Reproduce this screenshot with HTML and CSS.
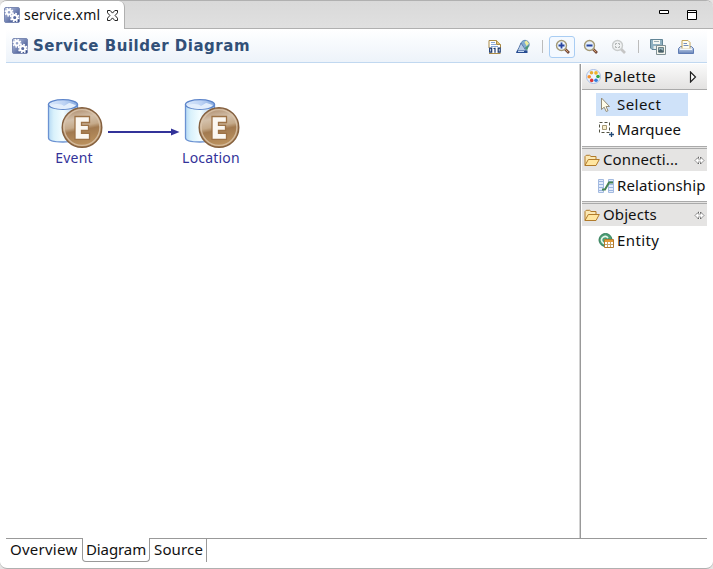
FILE: index.html
```html
<!DOCTYPE html>
<html lang="en">
<head>
<meta charset="utf-8">
<title>service.xml</title>
<link rel="stylesheet" href="styles.css">
</head>
<body>
<svg class="defs" width="0" height="0" aria-hidden="true">
  <defs>
    <linearGradient id="blue" x1="0" y1="0" x2="1" y2="1"><stop offset="0" stop-color="#c4cee6"/><stop offset=".5" stop-color="#7484b4"/><stop offset="1" stop-color="#263c7c"/></linearGradient>
    <linearGradient id="glass" x1="0" x2="1"><stop offset="0" stop-color="#b5d9f4"/><stop offset=".18" stop-color="#d9f1fb"/><stop offset=".5" stop-color="#f3fdff"/><stop offset="1" stop-color="#a9c9ec"/></linearGradient>
    <linearGradient id="lid" x1="0" x2="1"><stop offset="0" stop-color="#dbe9fb"/><stop offset=".55" stop-color="#bcd2f4"/><stop offset="1" stop-color="#84a8de"/></linearGradient>
    <linearGradient id="bronze" x1=".2" y1="0" x2=".4" y2="1"><stop offset="0" stop-color="#a88260"/><stop offset=".3" stop-color="#d3c0aa"/><stop offset=".5" stop-color="#c5aa8a"/><stop offset=".6" stop-color="#a27a50"/><stop offset="1" stop-color="#bd935f"/></linearGradient>
    <linearGradient id="steel" x1="0" y1="0" x2="0" y2="1"><stop offset="0" stop-color="#dfeaf7"/><stop offset="1" stop-color="#6683b8"/></linearGradient>
    <symbol id="gears" viewBox="0 0 16 16">
      <rect x=".5" y=".5" width="15" height="15" rx="1.5" fill="url(#blue)" stroke="#7b89b3"/>
      <g fill="none" stroke="#fff"><circle cx="5" cy="5.200" r="2.200" stroke-width="1.800"/><circle cx="5" cy="5.200" r="3.600" stroke-width="1.700" stroke-dasharray="1.500 1.330"/><circle cx="10.700" cy="10.500" r="2.500" stroke-width="1.900"/><circle cx="10.700" cy="10.500" r="4" stroke-width="1.700" stroke-dasharray="1.700 1.440"/></g>
    </symbol>
    <symbol id="entity" viewBox="0 0 56 52">
      <path d="M1.500 7v33c0 2.600 6 4 14.500 4s14.500-1.400 14.500-4V7z" fill="url(#glass)" stroke="#6b92d2" stroke-width="1.300"/>
      <ellipse cx="16" cy="6.500" rx="14.500" ry="4.800" fill="url(#lid)" stroke="#5d85ca" stroke-width="1.300"/>
      <path d="M3 7c8-2 12-1 14 1l5-3c4 1 7 2 7 2-2 3-8 4-13 4S4 10 3 7z" fill="#e3eefc"/>
      <circle cx="35" cy="29.500" r="19.800" fill="url(#bronze)" stroke="#84603f" stroke-width="1.400"/>
      <circle cx="35" cy="29.500" r="17.900" fill="none" stroke="#dbc6ad" stroke-width="1.400" opacity=".8"/>
      <path d="M28 18.500h14.500v6h-8v2.800h7v5h-7v3h8v6H28z" fill="#fbf7f1" stroke="#9d7246" stroke-width="1.300"/>
    </symbol>
    <symbol id="folder" viewBox="0 0 16 16">
      <path d="M1 13.500v-9l1.200-1.200h3.500L7 4.500h5v3" fill="#fbe8b3" stroke="#b17b2b"/>
      <path d="M1 13.500 4.300 7.500h11L12 13.500z" fill="#ffe6a0" stroke="#b17b2b"/>
    </symbol>
    <symbol id="pin" viewBox="0 0 11 9">
      <path d="M4.500 1 1 4.500 4.500 8M6.500 1 10 4.500 6.500 8M4.500 1v2h2V1M4.500 8V6h2v2" fill="#fff" stroke="#555" stroke-width=".9" stroke-dasharray="1.200 .5"/>
    </symbol>
  </defs>
</svg>
<div class="window">
  <header class="tabbar">
    <div class="tab">
      <svg class="i16"><use href="#gears"/></svg><span class="file">service.xml</span>
      <svg class="close" viewBox="0 0 11 11"><path d="M.5.500h2.700l2.300 2.600L7.800.500h2.700v2.300L8.100 5.500l2.400 2.700v2.300H7.800L5.500 7.900l-2.300 2.600H.5V8.200l2.400-2.700L.5 2.800z" fill="#fff" stroke="#222"/></svg>
    </div>
    <svg class="min" viewBox="0 0 10 4"><path d="M.5.500h9v3h-9z" fill="#fff" stroke="#000"/></svg>
    <svg class="max" viewBox="0 0 10 10"><path d="M.5.500h9v9h-9zM1 2.500h8" fill="#fff" stroke="#000"/></svg>
  </header>
  <div class="body">
    <div class="heading">
      <svg class="i16"><use href="#gears"/></svg>
      <h1>Service Builder Diagram</h1>
      <div class="toolbar">
        <svg class="tool" viewBox="0 0 16 16"><path d="M2 14V1.500h7.500l4 4V14z" fill="#fff"/><path d="M2 9V1.500h7.500l4 4V9M2 14.500h11.500" fill="none" stroke="#ab8b47"/><path d="M9.500 1.500v4h4" fill="#e1c379" stroke="#ab8b47"/><path d="M4 3.500h4M4 5.500h5M4 7.500h7" stroke="#8aa9d9"/><path d="M2.700 9.200h2v4h-2zM11.200 9.200h2v4h-2zM8 8.700v5M6.500 9.500H8" fill="none" stroke="#17346a" stroke-width="1.200"/></svg>
        <svg class="tool" viewBox="0 0 16 16"><circle cx="10" cy="5.500" r="4.200" fill="#82acd1" stroke="#648eb7"/><path d="m9.500 3 2-1.500 2.500 3-2.500 2.500z" fill="#eeee9a"/><path d="M10 8.500 14 6l-2 6z" fill="#4b9870"/><path d="M4 8.500 6 4l3 4.500 2.500 4H2z" fill="#b7cce5" stroke="#5b7bac"/><path d="M2 11.500h10.500V14H1z" fill="#264b91"/><path d="M3 12.500h6" stroke="#c5d8ef"/></svg>
        <i class="sep"></i>
        <span class="pressed"><svg class="tool" viewBox="0 0 16 16"><path d="m10 10 4 4" stroke="#754c3e" stroke-width="2.600"/><path d="m10 10 3 3" stroke="#d5a06a"/><circle cx="6.500" cy="6.500" r="5" fill="#edf5fc" stroke="#a39976" stroke-width="1.400"/><path d="M3.500 6.500h6M6.500 3.500v6" stroke="#2745a0" stroke-width="1.800"/></svg></span>
        <svg class="tool" viewBox="0 0 16 16"><path d="m10 10 4 4" stroke="#754c3e" stroke-width="2.600"/><path d="m10 10 3 3" stroke="#d5a06a"/><circle cx="6.500" cy="6.500" r="5" fill="#e5eff9" stroke="#a39976" stroke-width="1.400"/><path d="M3.500 6.500h6" stroke="#2745a0" stroke-width="1.800"/></svg>
        <svg class="tool" viewBox="0 0 16 16"><path d="m10 10 4 4" stroke="#c5c5c5" stroke-width="2.600"/><circle cx="6.500" cy="6.500" r="5" fill="#f0f2f3" stroke="#c9cccc" stroke-width="1.400"/><path d="M4.500 6V4.500H6M7 4.500h1.500V6M8.500 7v1.500H7M6 8.500H4.500V7" fill="none" stroke="#b1b5b5"/></svg>
        <i class="sep"></i>
        <svg class="tool" viewBox="0 0 16 16"><path d="M.5.500h12v10H2L.5 9z" fill="#8fb0c0" stroke="#628596"/><path d="M3 1h7v4H3z" fill="#f5f7f2"/><path d="M4 2.500h5" stroke="#9bacb2"/><path d="M3.500 7h5v3h-5z" fill="#e7eded"/><path d="M6.500 6.500h9v9h-9z" fill="#f6f6ee" stroke="#7f9094"/><path d="M8.500 8.500h5v4.500h-5z" fill="#9bb7bf" stroke="#6d8286"/><path d="m8.500 12 2-2 3 2v1.500h-5z" fill="#4a626b"/></svg>
        <svg class="tool" viewBox="0 0 16 16"><path d="M2.500 7.500h11l2 2v5H.5v-5z" fill="url(#steel)" stroke="#5f7cb4"/><path d="M4 10V1.500h6l2 2V10z" fill="#fffdf0" stroke="#c3a45b"/><path d="M5.500 4.500h3.500M5.500 6.500h5" stroke="#738ebf"/><path d="M2 9.500h12V11H2z" fill="#f3f8fe"/></svg>
      </div>
    </div>
    <main class="editor">
      <section class="canvas">
        <div class="node event"><svg class="entity"><use href="#entity"/></svg><span>Event</span></div>
        <svg class="link" viewBox="0 0 72 8"><path d="M0 4h65" stroke="#333399" stroke-width="2"/><path d="M63 .5v7L71.500 4z" fill="#333399"/></svg>
        <div class="node location"><svg class="entity"><use href="#entity"/></svg><span>Location</span></div>
      </section>
      <aside class="palette">
        <div class="palette-title">
          <svg class="i16" viewBox="0 0 16 16"><circle cx="7.500" cy="7.500" r="7" fill="#edf4fd" stroke="#a8bce3"/><circle cx="5.500" cy="3.700" r="1.800" fill="#e7aa32"/><circle cx="10" cy="3.900" r="1.800" fill="#f0b429"/><circle cx="3.200" cy="7.700" r="1.800" fill="#f5902c"/><circle cx="12" cy="7.500" r="1.800" fill="#35a947"/><circle cx="5.700" cy="11.400" r="1.800" fill="#da3838"/><circle cx="10" cy="11.300" r="1.800" fill="#307bdd"/></svg>
          <span class="t-palette">Palette</span>
          <svg class="expand" viewBox="0 0 8 12"><path d="M1.500 1v10l5-5z" fill="#fff" stroke="#222" stroke-width="1.200"/></svg>
        </div>
        <ul class="tools">
          <li class="selected"><svg class="i16" viewBox="0 0 16 16"><path d="M5.500 1v11.500l2.700-2.300 2 4.300 1.800-.8-2-4.200h3.500z" fill="#fffce9" stroke="#938b78"/></svg><span class="t-select">Select</span></li>
          <li class="marquee"><svg class="i16" viewBox="0 0 16 16"><path d="M.5.500h10v10H.5z" fill="none" stroke="#515142" stroke-dasharray="3 2"/><path d="M3.500 3.500h4v4h-4z" fill="#f8efcf" stroke="#a49773"/><path d="M10 12.500h5M12.500 10v5" stroke="#234b79" stroke-width="1.300"/></svg><span class="t-marquee">Marquee</span></li>
        </ul>
        <div class="drawer"><svg class="i16"><use href="#folder"/></svg><span class="t-connecti">Connecti...</span><svg class="pin"><use href="#pin"/></svg></div>
        <ul class="tools one">
          <li class="relation"><svg class="i16" viewBox="0 0 16 16"><path d="M.5 1.500h5v13h-5zM10.500 1.500h5v13h-5z" fill="#e3ecfb" stroke="#a3bae0"/><path d="M1 3.500h4M1 6.500h4M1 9.500h4M1 12.500h4M11 3.500h4M11 6.500h4M11 9.500h4M11 12.500h4" stroke="#9bb5e0"/><path d="M4 11.500h3l4-7h4" fill="none" stroke="#468352" stroke-width="2"/></svg><span class="t-relationship">Relationship</span></li>
        </ul>
        <div class="drawer"><svg class="i16"><use href="#folder"/></svg><span class="t-objects">Objects</span><svg class="pin"><use href="#pin"/></svg></div>
        <ul class="tools">
          <li class="relation"><svg class="i16" viewBox="0 0 16 16"><circle cx="7.500" cy="7" r="6.500" fill="#4c9e75" stroke="#347e5a"/><path d="M10 5A3.500 3.500 0 1 0 9 10" fill="none" stroke="#e6f5ec" stroke-width="1.600"/><path d="M6.500 6.500h9v8h-9z" fill="#fff" stroke="#b47b2c"/><path d="M7 7h8v2H7z" fill="#e59a36"/><path d="M7 11.500h8M9.500 9v5M12.500 9v5" stroke="#c6a469"/></svg><span class="t-entity">Entity</span></li>
        </ul>
      </aside>
    </main>
    <nav class="pages"><span class="overview">Overview</span><span class="active">Diagram</span><span class="source">Source</span></nav>
  </div>
</div>
</body>
</html>
```

FILE: styles.css
```css
* { box-sizing: border-box; }
body { margin: 0; background: #e5e4e3; font: 15px/20px "Noto Sans", "Open Sans", sans-serif; color: #111; }
svg { display: block; flex: none; }
.defs { position: absolute; }
.i16, .tool { width: 16px; height: 16px; }
.window { width: 713px; height: 569px; background: #fff; border-top: 1px solid #b0b0b0; border-bottom: 1px solid #b0b0b0; border-radius: 7px; overflow: hidden; display: flex; flex-direction: column; }
.tabbar { height: 28px; display: flex; background: linear-gradient(#d9d9d9, #e0e0e0); border-bottom: 1px solid #b0b0b0; flex: none; }
.tab { width: 125px; height: 28px; display: flex; align-items: center; padding-left: 4px; background: #fff; border-right: 1px solid #b0b0b0; border-top-right-radius: 6px; }
.file { width: 78px; margin-left: 4px; font-size: 14px; letter-spacing: .25px; white-space: nowrap; }
.close { width: 11px; height: 11px; margin-left: 5px; }
.min { width: 10px; height: 4px; margin: 9px 0 0 534px; }
.max { width: 10px; height: 10px; margin: 9px 0 0 18px; }
.body { margin: 0 6px; flex: 1; display: flex; flex-direction: column; }
.heading { height: 34px; display: flex; align-items: center; padding-left: 6px; background: linear-gradient(#fff, #edf3fa); border-bottom: 1px solid #c1d8f0; flex: none; }
h1 { margin: 0 0 0 5px; width: 220px; color: #325078; font: bold 15px/20px "DejaVu Sans", sans-serif; letter-spacing: .52px; white-space: nowrap; }
.toolbar { display: flex; align-items: center; margin: 2px 0 0 234px; }
.toolbar > .tool + .tool { margin-left: 12px; }
.toolbar > .pressed + .tool { margin-left: 8px; }
.sep { width: 1px; height: 13px; margin: 0 6px 0 11px; background: #bcbcbc; }
.sep + .tool { margin-left: 5px; }
.pressed { width: 26px; height: 22px; padding: 2px 5px; border: 1px solid #a9cdf3; border-radius: 3px; background: #f4f9ff; }
.editor { flex: 1; display: flex; margin-top: 1px; border-bottom: 1px solid #999; }
.canvas { position: relative; width: 574px; border-right: 1px solid #d2d2d2; }
.node { position: absolute; top: 34px; width: 64px; text-align: center; color: #333399; font-size: 14px; line-height: 18px; letter-spacing: .2px; }
.event { left: 36px; }
.location { left: 173px; }
.entity { width: 56px; height: 52px; margin-left: 5px; }
.node span { display: block; margin-top: -1px; white-space: nowrap; }
.link { position: absolute; left: 102px; top: 64px; width: 72px; height: 8px; }
.palette { width: 127px; border-left: 1px solid #999; padding-left: 1px; letter-spacing: .1px; }
.palette span { white-space: nowrap; margin-top: -2px; }
.palette-title { height: 26px; display: flex; align-items: center; padding-left: 4px; background: linear-gradient(#fafafa, #e3e2e1); border-bottom: 1px solid #aaa; }
.palette-title .t-palette { width: 83px; margin-left: 2px; letter-spacing: .45px; }
.expand { width: 8px; height: 12px; margin-left: 2px; }
.tools { list-style: none; margin: 0; padding: 3px 0 3px 14px; }
.tools li { height: 23px; display: flex; align-items: center; gap: 5px; }
.tools .selected { width: 92px; background: #cfe2f9; }
.t-select { letter-spacing: .45px; }
.tools .marquee { height: 27px; padding-left: 3px; gap: 2px; }
.tools .relation { padding-left: 2px; gap: 3px; }
.tools.one { height: 30px; }
.drawer { height: 25px; display: flex; align-items: center; padding-left: 2px; background: #e5e4e3; border-top: 3px double #aaa; }
.drawer span { width: 91px; margin-left: 3px; }
.t-entity { letter-spacing: .4px; }
.pin { width: 11px; height: 9px; }
.pages { height: 29px; display: flex; }
.pages span { height: 23px; white-space: nowrap; }
.pages .overview { width: 76px; padding-left: 4px; letter-spacing: .25px; }
.pages .active { width: 68px; height: 24px; padding-left: 3px; margin-top: -1px; line-height: 22px; border: solid #999; border-width: 0 1px 1px; border-radius: 0 0 4px 4px; background: #fff; letter-spacing: -.1px; }
.pages .source { width: 57px; padding-left: 4px; border-right: 1px solid #999; letter-spacing: .15px; }
```
